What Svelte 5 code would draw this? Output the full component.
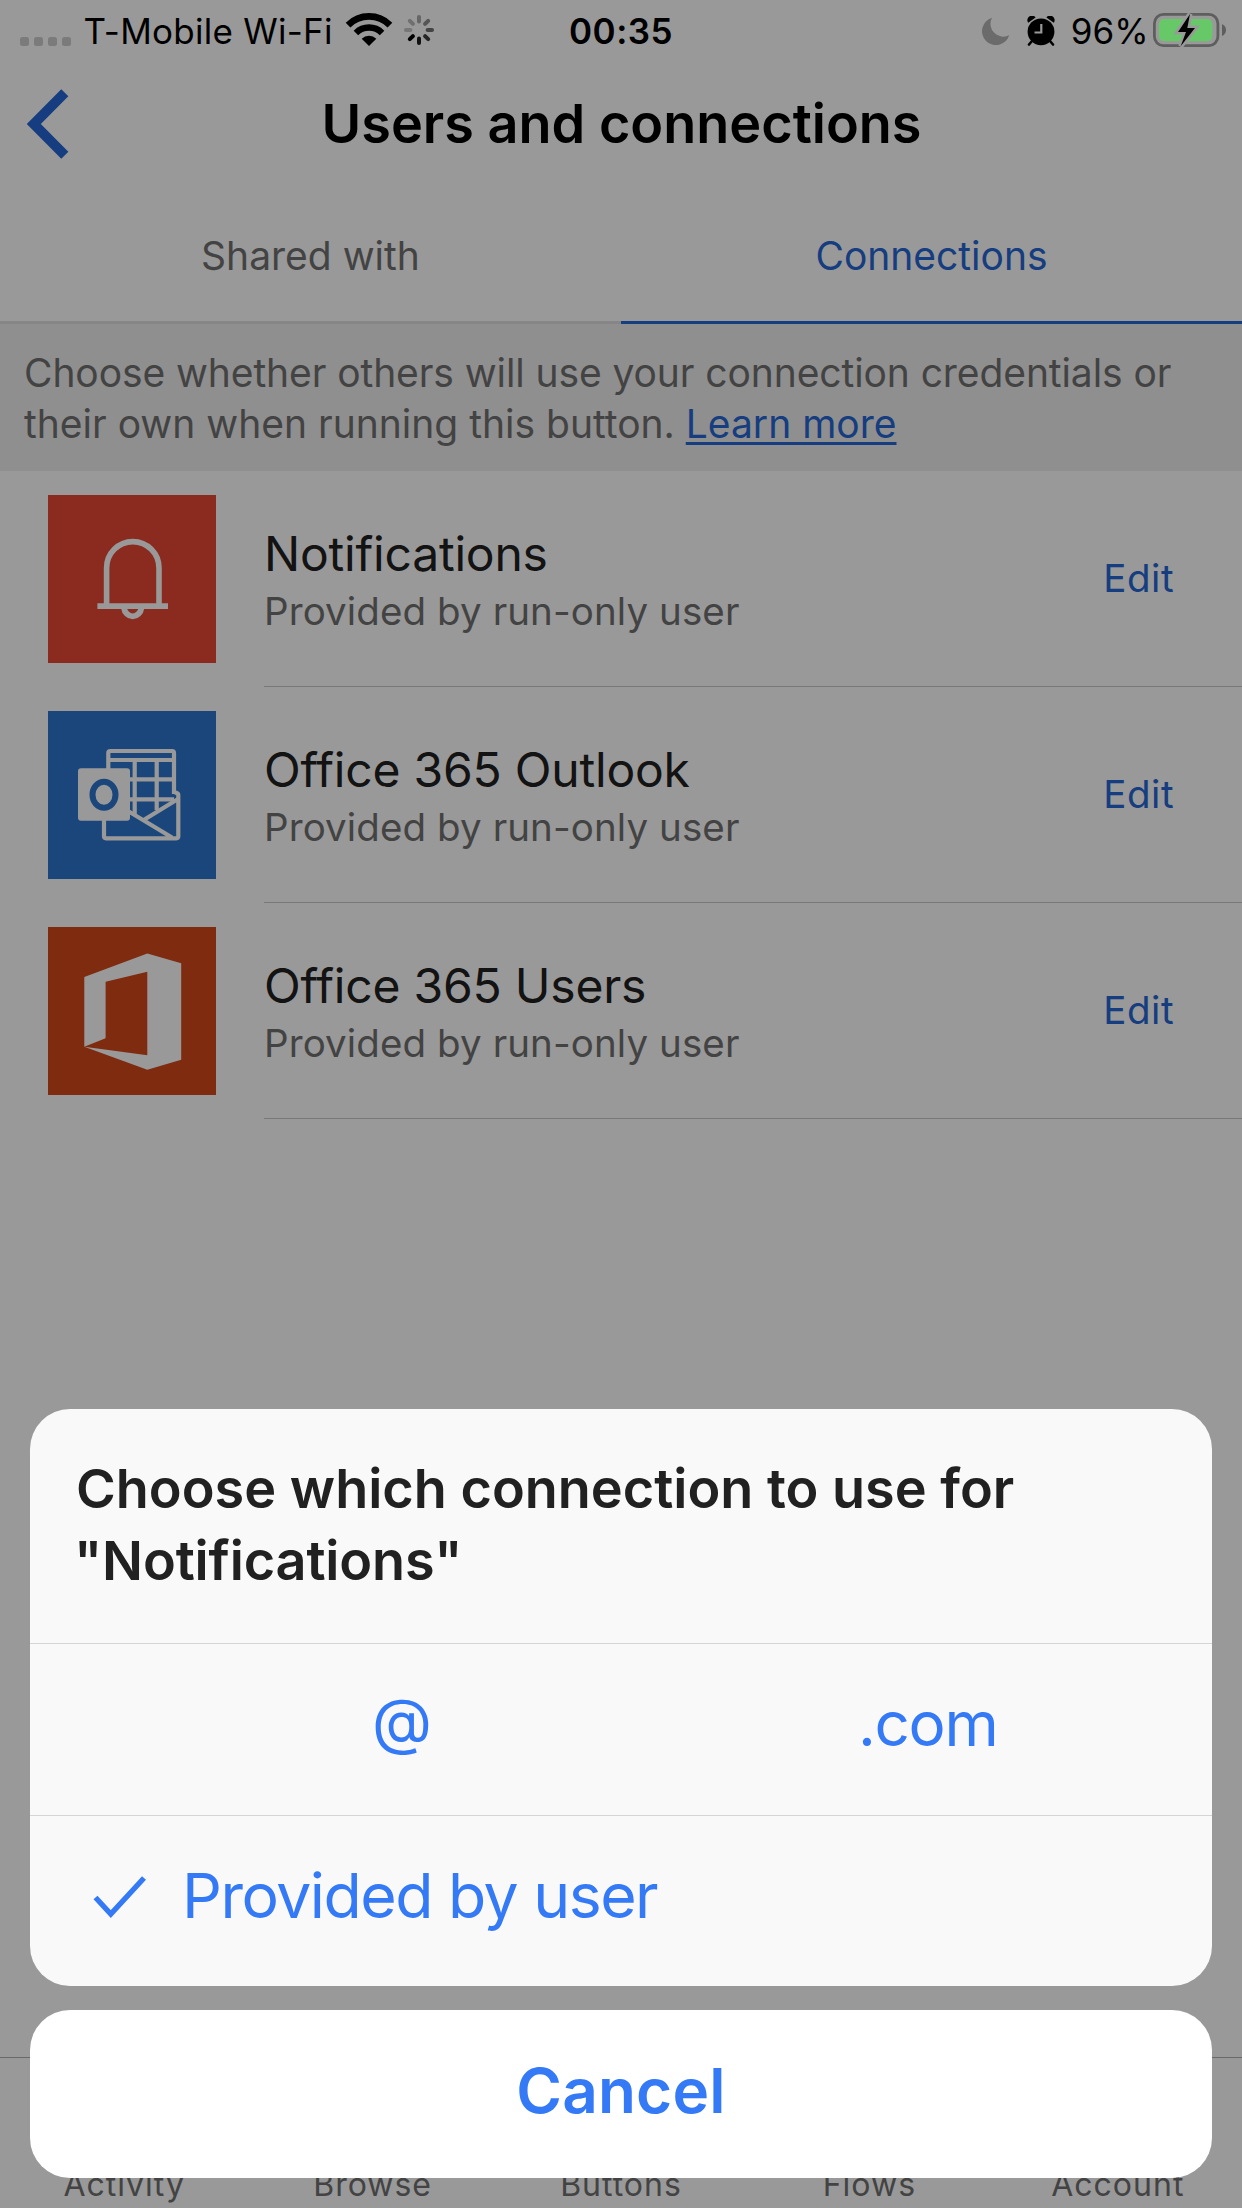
<script>
  const connections = [
    { name: 'Notifications', icon: 'bell', status: 'Provided by run-only user' },
    { name: 'Office 365 Outlook', icon: 'outlook', status: 'Provided by run-only user' },
    { name: 'Office 365 Users', icon: 'office', status: 'Provided by run-only user' }
  ];
  const navItems = ['Activity', 'Browse', 'Buttons', 'Flows', 'Account'];
  const spokes = ['#666', '#555', '#444', '#262626', '#111', '#000', '#777', '#707070'];
</script>

<div class="screen">
  <div class="page">
    <header class="nav">
      <svg class="back" width="46" height="74" viewBox="0 0 46 74" aria-label="Back">
        <path d="M39.8 5.7 8.8 37l31 31.3" fill="none" stroke="#2566d4" stroke-width="10" />
      </svg>
      <h1>Users and connections</h1>
    </header>

    <div class="tabs">
      <div class="tab">Shared with</div>
      <div class="tab active">Connections</div>
    </div>

    <div class="info">
      <span class="first">Choose whether others will use your connection credentials or</span><br />
      <span>their own when running this button.</span>
      <a href="#learn">Learn more</a>
    </div>

    <div class="rows">
      {#each connections as item}
        <div class="row">
          <div class="tile {item.icon}">
            {#if item.icon === 'bell'}
              <svg viewBox="0 0 168 168" fill="none" stroke="#fff">
                <path d="M58.6 110V73a26.2 26.4 0 0 1 52.4 0v37" stroke-width="5.6" />
                <path d="M49.4 111.2H120" stroke-width="5.8" />
                <path d="M76 113a8.8 9.8 0 0 0 17.4 0" stroke-width="5.8" />
              </svg>
            {:else if item.icon === 'outlook'}
              <svg viewBox="0 0 168 168" fill="none" stroke="#fff" stroke-width="4.2" stroke-linejoin="round">
                <path d="M60.3 60V42q0-2 2-2H124q2 0 2 2v41M60 49h66M80 68.3h46M80 88.3h46M86.7 49v56M108.7 49v50" />
                <path d="M56 108v17.3q0 2 2 2h70.3q2 0 2-2V84q0-2.500-4-2.500M80 100l44 26.500M130 88l-33.500 20.500" />
                <rect x="30" y="57.3" width="52" height="52.4" rx="3" fill="#fff" stroke="none" />
                <ellipse cx="56" cy="83.7" rx="11.5" ry="13" stroke="#2d76cd" stroke-width="6" />
              </svg>
            {:else}
              <svg viewBox="0 0 168 168">
                <path
                  d="M36.3 50 99.3 26.5 133.2 36.3V132.7L99.3 142.8 36.3 119.7 99.3 128.3V44.7L57.6 54.7V111.3L36.3 119.7Z"
                  fill="#fff"
                />
              </svg>
            {/if}
          </div>
          <div class="body">
            <div class="labels">
              <div class="name">{item.name}</div>
              <div class="status">{item.status}</div>
            </div>
            <div class="edit">Edit</div>
          </div>
        </div>
      {/each}
    </div>

    <nav class="bottom">
      {#each navItems as label}
        <span>{label}</span>
      {/each}
    </nav>
  </div>

  <div class="scrim"></div>

  <div class="statusbar">
    <div class="left">
      <div class="dots"><i></i><i></i><i></i><i></i></div>
      <span class="carrier">T-Mobile Wi-Fi</span>
      <svg class="wifi" width="46" height="33" viewBox="0 0 46 33" fill="none" stroke="#000">
        <path d="M2.07 12.07a29.6 29.6 0 0 1 41.86 0" stroke-width="6.6" />
        <path d="M9.92 19.92a18.5 18.5 0 0 1 26.16 0" stroke-width="6.4" />
        <path d="M23 33 15.7 25.7a10.3 10.3 0 0 1 14.6 0Z" fill="#000" stroke="none" />
      </svg>
      <svg class="spinner" width="30" height="30" viewBox="-15 -15 30 30">
        {#each spokes as color, i}
          <path d="M0-13V-8.6" stroke={color} stroke-width="4" stroke-linecap="round" transform="rotate({i * 45})" />
        {/each}
      </svg>
    </div>
    <span class="time">00:35</span>
    <div class="right">
      <svg class="moon" width="29" height="29" viewBox="0 0 29 29">
        <path d="M11 .8A13.9 13.9 0 1 0 28.2 18.2 12.8 12.8 0 0 1 11 .8Z" fill="#6b6b6b" />
      </svg>
      <svg class="alarm" width="28" height="30" viewBox="0 0 28 30">
        <path d="M5.5 24.5 2 28.5M22.5 24.5l3.5 4" stroke="#000" stroke-width="2.6" stroke-linecap="round" />
        <circle cx="14" cy="15.8" r="13.4" />
        <path d="M1.2 6.8A4.3 4.3 0 0 1 8.6 1.5ZM26.8 6.8A4.3 4.3 0 0 0 19.4 1.5Z" />
        <path d="M14.3 8v8.5H7.5" fill="none" stroke="#999" stroke-width="2.2" />
      </svg>
      <span class="percent">96%</span>
      <svg class="battery" width="73" height="34" viewBox="0 0 73 34">
        <rect x="1.4" y="1.4" width="63.5" height="31.2" rx="9" fill="none" stroke="#5e5e5e" stroke-width="2.8" />
        <rect x="6" y="6" width="53.3" height="22.3" rx="5" fill="#67c868" />
        <path d="M69 11q4 2 4 6t-4 6Z" fill="#5e5e5e" />
        <path
          d="M37 1 25 19h8l-5.300 14.300L42 15h-7.700Z"
          fill="#000"
          stroke="#999"
          stroke-width="5"
        />
        <path d="M37 1 25 19h8l-5.300 14.300L42 15h-7.700Z" />
      </svg>
    </div>
  </div>

  <div class="sheet">
    <div class="options">
      <h2><span>Choose which connection to use for</span><br /><span class="target">"Notifications"</span></h2>
      <div class="option account"><span class="at">@</span><span class="com">.com</span></div>
      <div class="option selected">
        <svg width="60" height="50" viewBox="0 0 60 50">
          <path d="M5.500 26.500 20.800 43 54 7" fill="none" stroke="#3479f6" stroke-width="5.4" />
        </svg>
        <span>Provided by user</span>
      </div>
    </div>
    <div class="cancel">Cancel</div>
  </div>
</div>

<style>
  :global(body) {
    margin: 0;
    background: #999;
  }
  .screen {
    position: relative;
    width: 1242px;
    height: 2208px;
    overflow: hidden;
    font-family: 'Inter', 'Liberation Sans', sans-serif;
    white-space: nowrap;
  }
  .page {
    display: flex;
    flex-direction: column;
    height: 2208px;
    box-sizing: border-box;
    padding-top: 62px;
    background: #fff;
  }
  svg {
    display: block;
    flex: none;
  }
  .nav {
    display: grid;
    grid-template-columns: 90px 1fr 90px;
    align-items: center;
    height: 123px;
    flex: none;
  }
  .back {
    margin-left: 25px;
  }
  h1 {
    margin: 0;
    padding-left: 1px;
    text-align: center;
    font-size: 54px;
    line-height: 70px;
    font-weight: 600;
  }
  .tabs {
    display: flex;
    height: 139px;
    flex: none;
  }
  .tab {
    flex: 1;
    box-sizing: border-box;
    border-bottom: 3px solid #dfdfdf;
    text-align: center;
    font-size: 39px;
    line-height: 142px;
    color: #717171;
  }
  .tab.active {
    color: #2566d4;
    border-color: #2566d4;
  }
  .info {
    box-sizing: border-box;
    height: 147px;
    flex: none;
    padding: 23px 0 0 24px;
    background: #eee;
    color: #717171;
    font-size: 39px;
    line-height: 51px;
  }
  .info .first {
    letter-spacing: -0.09px;
  }
  .info a {
    color: #2566d4;
    text-decoration-thickness: 2.5px;
    text-underline-offset: 4px;
    text-decoration-skip-ink: none;
  }
  .rows {
    flex: 1;
  }
  .row {
    display: flex;
    align-items: center;
    gap: 48px;
    height: 216px;
    padding-left: 48px;
  }
  .tile {
    width: 168px;
    height: 168px;
    flex: none;
  }
  .bell {
    background: #e84835;
  }
  .outlook {
    background: #2d76cd;
  }
  .office {
    background: #d4481c;
  }
  .body {
    flex: 1;
    display: flex;
    align-items: center;
    justify-content: space-between;
    box-sizing: border-box;
    height: 216px;
    padding-right: 68px;
    border-bottom: 1px solid #c8c8c8;
  }
  .labels {
    padding-top: 7px;
  }
  .name {
    font-size: 48px;
    line-height: 58px;
    letter-spacing: -0.2px;
    color: #212121;
  }
  .status {
    font-size: 38.5px;
    line-height: 57px;
    letter-spacing: 0.1px;
    color: #717171;
  }
  .edit {
    padding-bottom: 2px;
    font-size: 38.5px;
    letter-spacing: 0.5px;
    color: #2566d4;
  }
  .bottom {
    display: grid;
    grid-template-columns: repeat(5, 1fr);
    align-items: end;
    box-sizing: border-box;
    height: 151px;
    flex: none;
    border-top: 1px solid #b0b0b0;
    text-align: center;
    font-size: 32px;
    line-height: 46px;
    letter-spacing: 1px;
    color: #717171;
  }
  .scrim {
    position: absolute;
    inset: 0;
    background: rgba(0, 0, 0, 0.4);
  }
  .statusbar {
    position: absolute;
    inset: 0 0 auto 0;
    display: grid;
    grid-template-columns: 1fr auto 1fr;
    height: 62px;
    box-sizing: border-box;
    padding: 0 16px 0 20px;
    font-size: 35px;
    line-height: 63px;
    color: #000;
  }
  .left,
  .right {
    display: flex;
    align-items: flex-start;
  }
  .right {
    justify-content: flex-end;
  }
  .dots {
    display: flex;
    gap: 5px;
    margin: 37px 12.5px 0 0;
  }
  .dots i {
    width: 9px;
    height: 9px;
    border-radius: 2.5px;
    background: #7b7b7b;
  }
  .carrier {
    width: 262.5px;
    letter-spacing: 0.26px;
  }
  .wifi {
    margin: 13px 12px 0 0;
    overflow: visible;
  }
  .spinner {
    margin-top: 15px;
  }
  .time {
    font-weight: 600;
    letter-spacing: 0.47px;
    padding-right: 4px;
  }
  .moon {
    margin: 16.5px 17px 0 0;
  }
  .alarm {
    margin: 15.5px 15.5px 0 0;
  }
  .percent {
    margin-right: 4.5px;
  }
  .battery {
    margin-top: 13px;
  }
  .sheet {
    position: absolute;
    left: 30px;
    right: 30px;
    bottom: 30px;
    display: flex;
    flex-direction: column;
    gap: 24px;
    color: #3479f6;
    font-size: 62px;
  }
  .options {
    height: 577px;
    border-radius: 40px;
    background: #f9f9f9;
  }
  h2 {
    box-sizing: border-box;
    height: 235px;
    margin: 0;
    padding: 44px 0 0 46px;
    border-bottom: 1px solid #d5d5d5;
    color: #212121;
    font-size: 54px;
    font-weight: 600;
    line-height: 72px;
  }
  .target {
    margin-left: -2px;
    letter-spacing: -0.15px;
  }
  .option {
    display: flex;
    align-items: center;
    box-sizing: border-box;
    height: 171px;
  }
  .account {
    height: 172px;
    border-bottom: 1px solid #d5d5d5;
    padding: 0 0 12px 342px;
    gap: 426px;
  }
  .at {
    padding-bottom: 6px;
  }
  .com {
    letter-spacing: -1.3px;
  }
  .selected {
    padding: 0 0 14px 60px;
    gap: 32px;
    font-size: 62.5px;
    letter-spacing: -1.5px;
  }
  .selected svg {
    margin-top: 2px;
  }
  .cancel {
    box-sizing: border-box;
    height: 168px;
    border-radius: 40px;
    background: #fff;
    text-align: center;
    font-weight: 600;
    line-height: 162px;
    letter-spacing: 0.2px;
  }
</style>
